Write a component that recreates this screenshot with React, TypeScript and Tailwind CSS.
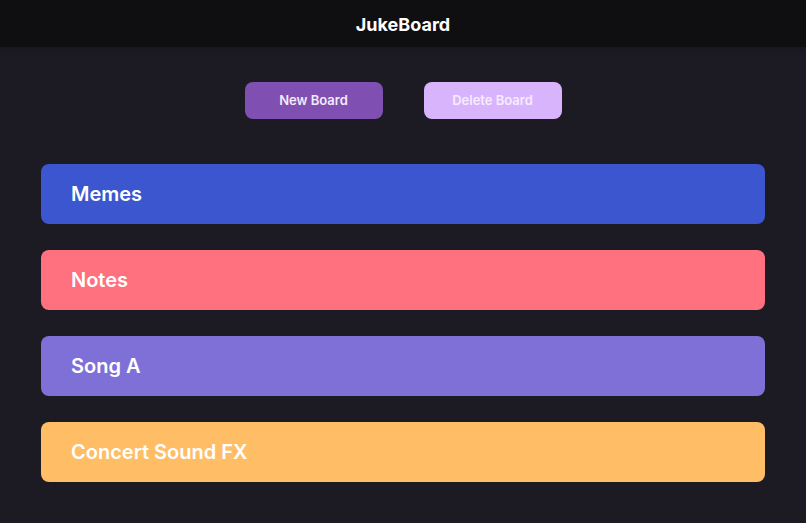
import React from 'react';

interface Board {
  id: string;
  name: string;
  color: string;
}

const boards: Board[] = [
  { id: 'memes', name: 'Memes', color: 'bg-[#3b56cf]' },
  { id: 'notes', name: 'Notes', color: 'bg-[#ff717f]' },
  { id: 'song-a', name: 'Song A', color: 'bg-[#7e70d7]' },
  { id: 'concert', name: 'Concert Sound FX', color: 'bg-[#ffbd66]' },
];

export default function App() {
  return (
    <div className="min-h-screen bg-[#1c1b23] font-['Inter',sans-serif] text-white">
      <header className="h-[47px] bg-[#0f0f11] flex items-center justify-center pt-[2px] shadow-md">
        <h1 className="text-[18px] font-bold">JukeBoard</h1>
      </header>

      <div className="flex justify-center gap-[41px] pt-[35px]">
        <button className="w-[138px] h-[37px] rounded-lg bg-[#7f50b1] text-[13px] font-semibold text-[#f3eafc]">
          New Board
        </button>
        <button className="w-[138px] h-[37px] rounded-lg bg-[#d8b4fd] text-[13px] font-semibold text-[#f6ecff]">
          Delete Board
        </button>
      </div>

      <div className="px-[41px] pt-[45px] flex flex-col gap-[26px]">
        {boards.map((b) => (
          <div key={b.id} className={`${b.color} h-[60px] rounded-lg flex items-center px-[30px]`}>
            <span className="text-[20px] font-semibold">{b.name}</span>
          </div>
        ))}
      </div>
    </div>
  );
}
